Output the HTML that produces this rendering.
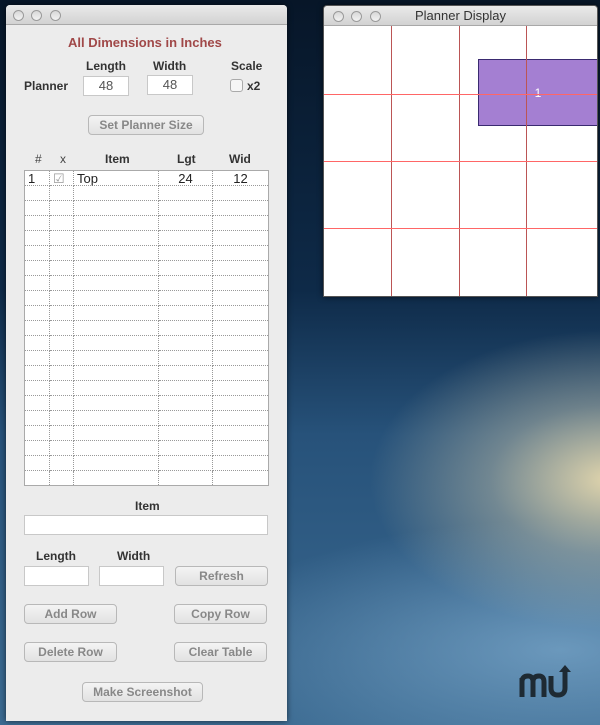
<!DOCTYPE html>
<html><head><style>
*{margin:0;padding:0;box-sizing:border-box}
body{width:600px;height:725px;overflow:hidden;position:relative;font-family:"Liberation Sans",sans-serif;
background:
radial-gradient(ellipse 240px 150px at 610px 480px,rgba(235,220,175,.95),rgba(200,195,170,.45) 50%,rgba(0,0,0,0) 100%),
radial-gradient(ellipse 360px 130px at 560px 650px,rgba(120,165,200,.8),rgba(0,0,0,0) 100%),
linear-gradient(180deg,#071628 0%,#0e2a48 40%,#27527a 60%,#3c6b92 100%);}
.win{position:absolute;background:#ececec;border-radius:4px 4px 0 0;box-shadow:0 0 6px rgba(0,0,0,.6)}
.tb{height:20px;background:linear-gradient(#eaeaea,#d2d2d2);border-bottom:1px solid #a8a8a8;border-radius:4px 4px 0 0;position:relative;font-size:13px;color:#333;text-align:center;line-height:20px}
.dot{position:absolute;top:5px;width:11px;height:11px;border-radius:50%;background:linear-gradient(#d8d8d8,#f2f2f2);border:1px solid #9a9a9a}
.a{position:absolute}
.lbl{position:absolute;font-size:12px;font-weight:bold;color:#333}
.tf{position:absolute;background:#fff;border:1px solid #c8c8c8;font-size:13px;color:#555;text-align:center;line-height:18px}
.btn{position:absolute;height:20px;border:1px solid #b8b8b8;border-radius:4px;background:linear-gradient(#f4f4f4,#e2e2e2);font-size:12px;font-weight:bold;color:#888;text-align:center;line-height:18px}
table{border-collapse:collapse;position:absolute;left:24px;top:170px;background:#fff;border:1px solid #aaa}
td{border:1px dotted #999;height:15px;font-size:13px;color:#222;padding:0 3px;line-height:13px}
</style></head><body>
<div class="win" style="left:6px;top:5px;width:281px;height:716px">
<div class="tb"><div class="dot" style="left:7px"></div><div class="dot" style="left:25px"></div><div class="dot" style="left:44px"></div></div>
<div class="lbl" style="left:62px;top:30px;color:#a04848;font-size:13px">All Dimensions in Inches</div>
<div class="lbl" style="left:80px;top:54px">Length</div>
<div class="lbl" style="left:147px;top:54px">Width</div>
<div class="lbl" style="left:225px;top:54px">Scale</div>
<div class="lbl" style="left:18px;top:74px">Planner</div>
<div class="tf" style="left:77px;top:71px;width:46px;height:20px">48</div>
<div class="tf" style="left:141px;top:70px;width:46px;height:20px">48</div>
<div class="a" style="left:224px;top:74px;width:13px;height:13px;border:1px solid #aaa;border-radius:3px;background:#f6f6f6"></div>
<div class="lbl" style="left:241px;top:74px">x2</div>
<div class="btn" style="left:82px;top:110px;width:116px">Set Planner Size</div>
<div class="lbl" style="left:29px;top:147px;font-weight:normal;color:#444">#</div>
<div class="lbl" style="left:54px;top:147px;font-weight:normal;color:#444">x</div>
<div class="lbl" style="left:99px;top:147px">Item</div>
<div class="lbl" style="left:171px;top:147px">Lgt</div>
<div class="lbl" style="left:223px;top:147px">Wid</div>
</div>
<table style="top:170px">
<colgroup><col style="width:25px"><col style="width:24px"><col style="width:85px"><col style="width:54px"><col style="width:56px"></colgroup>
<tr><td>1</td><td style="color:#999">☑</td><td>Top</td><td style="text-align:center">24</td><td style="text-align:center">12</td></tr>
<tr><td></td><td></td><td></td><td></td><td></td></tr><tr><td></td><td></td><td></td><td></td><td></td></tr><tr><td></td><td></td><td></td><td></td><td></td></tr><tr><td></td><td></td><td></td><td></td><td></td></tr><tr><td></td><td></td><td></td><td></td><td></td></tr><tr><td></td><td></td><td></td><td></td><td></td></tr><tr><td></td><td></td><td></td><td></td><td></td></tr><tr><td></td><td></td><td></td><td></td><td></td></tr><tr><td></td><td></td><td></td><td></td><td></td></tr><tr><td></td><td></td><td></td><td></td><td></td></tr><tr><td></td><td></td><td></td><td></td><td></td></tr><tr><td></td><td></td><td></td><td></td><td></td></tr><tr><td></td><td></td><td></td><td></td><td></td></tr><tr><td></td><td></td><td></td><td></td><td></td></tr><tr><td></td><td></td><td></td><td></td><td></td></tr><tr><td></td><td></td><td></td><td></td><td></td></tr><tr><td></td><td></td><td></td><td></td><td></td></tr><tr><td></td><td></td><td></td><td></td><td></td></tr><tr><td></td><td></td><td></td><td></td><td></td></tr><tr><td></td><td></td><td></td><td></td><td></td></tr>
</table>
<div class="lbl" style="left:135px;top:499px">Item</div>
<div class="tf" style="left:24px;top:515px;width:244px;height:20px"></div>
<div class="lbl" style="left:36px;top:549px">Length</div>
<div class="lbl" style="left:117px;top:549px">Width</div>
<div class="tf" style="left:24px;top:566px;width:65px;height:20px"></div>
<div class="tf" style="left:99px;top:566px;width:65px;height:20px"></div>
<div class="btn" style="left:175px;top:566px;width:93px">Refresh</div>
<div class="btn" style="left:24px;top:604px;width:93px">Add Row</div>
<div class="btn" style="left:174px;top:604px;width:93px">Copy Row</div>
<div class="btn" style="left:24px;top:642px;width:93px">Delete Row</div>
<div class="btn" style="left:174px;top:642px;width:93px">Clear Table</div>
<div class="btn" style="left:82px;top:682px;width:121px">Make Screenshot</div>

<div class="win" style="left:323px;top:5px;width:275px;height:292px;background:#fff;border:1px solid #555;overflow:hidden">
<div class="tb"><div class="dot" style="left:9px"></div><div class="dot" style="left:27px"></div><div class="dot" style="left:46px"></div>Planner Display</div>
<div class="a" style="left:154px;top:53px;width:119px;height:67px;background:#a47fd2;border:1px solid #3a2a70;border-right:none;color:#fff;font-size:12px;text-align:center;line-height:67px">1</div>
<div class="a" style="left:67px;top:20px;width:1px;height:272px;background:#b55"></div>
<div class="a" style="left:135px;top:20px;width:1px;height:272px;background:#b55"></div>
<div class="a" style="left:202px;top:20px;width:1px;height:272px;background:#b55"></div>
<div class="a" style="left:0;top:88px;width:275px;height:1px;background:#f66"></div>
<div class="a" style="left:0;top:155px;width:275px;height:1px;background:#f66"></div>
<div class="a" style="left:0;top:222px;width:275px;height:1px;background:#f66"></div>
</div>
<svg class="a" style="left:518px;top:664px" width="56" height="34" viewBox="0 0 56 34">
<path d="M4 33V14M4 18Q4 12 10 12Q15 12 15 18V33M15 18Q15 12 21 12Q26 12 26 18V33" stroke="#1e2a33" stroke-width="5" fill="none"/>
<path d="M33 12V24Q33 31 40 31Q47 31 47 24V6" stroke="#1e2a33" stroke-width="5" fill="none"/>
<path d="M41 8L47 1L53 8Z" fill="#1e2a33"/>
</svg>
</body></html>
